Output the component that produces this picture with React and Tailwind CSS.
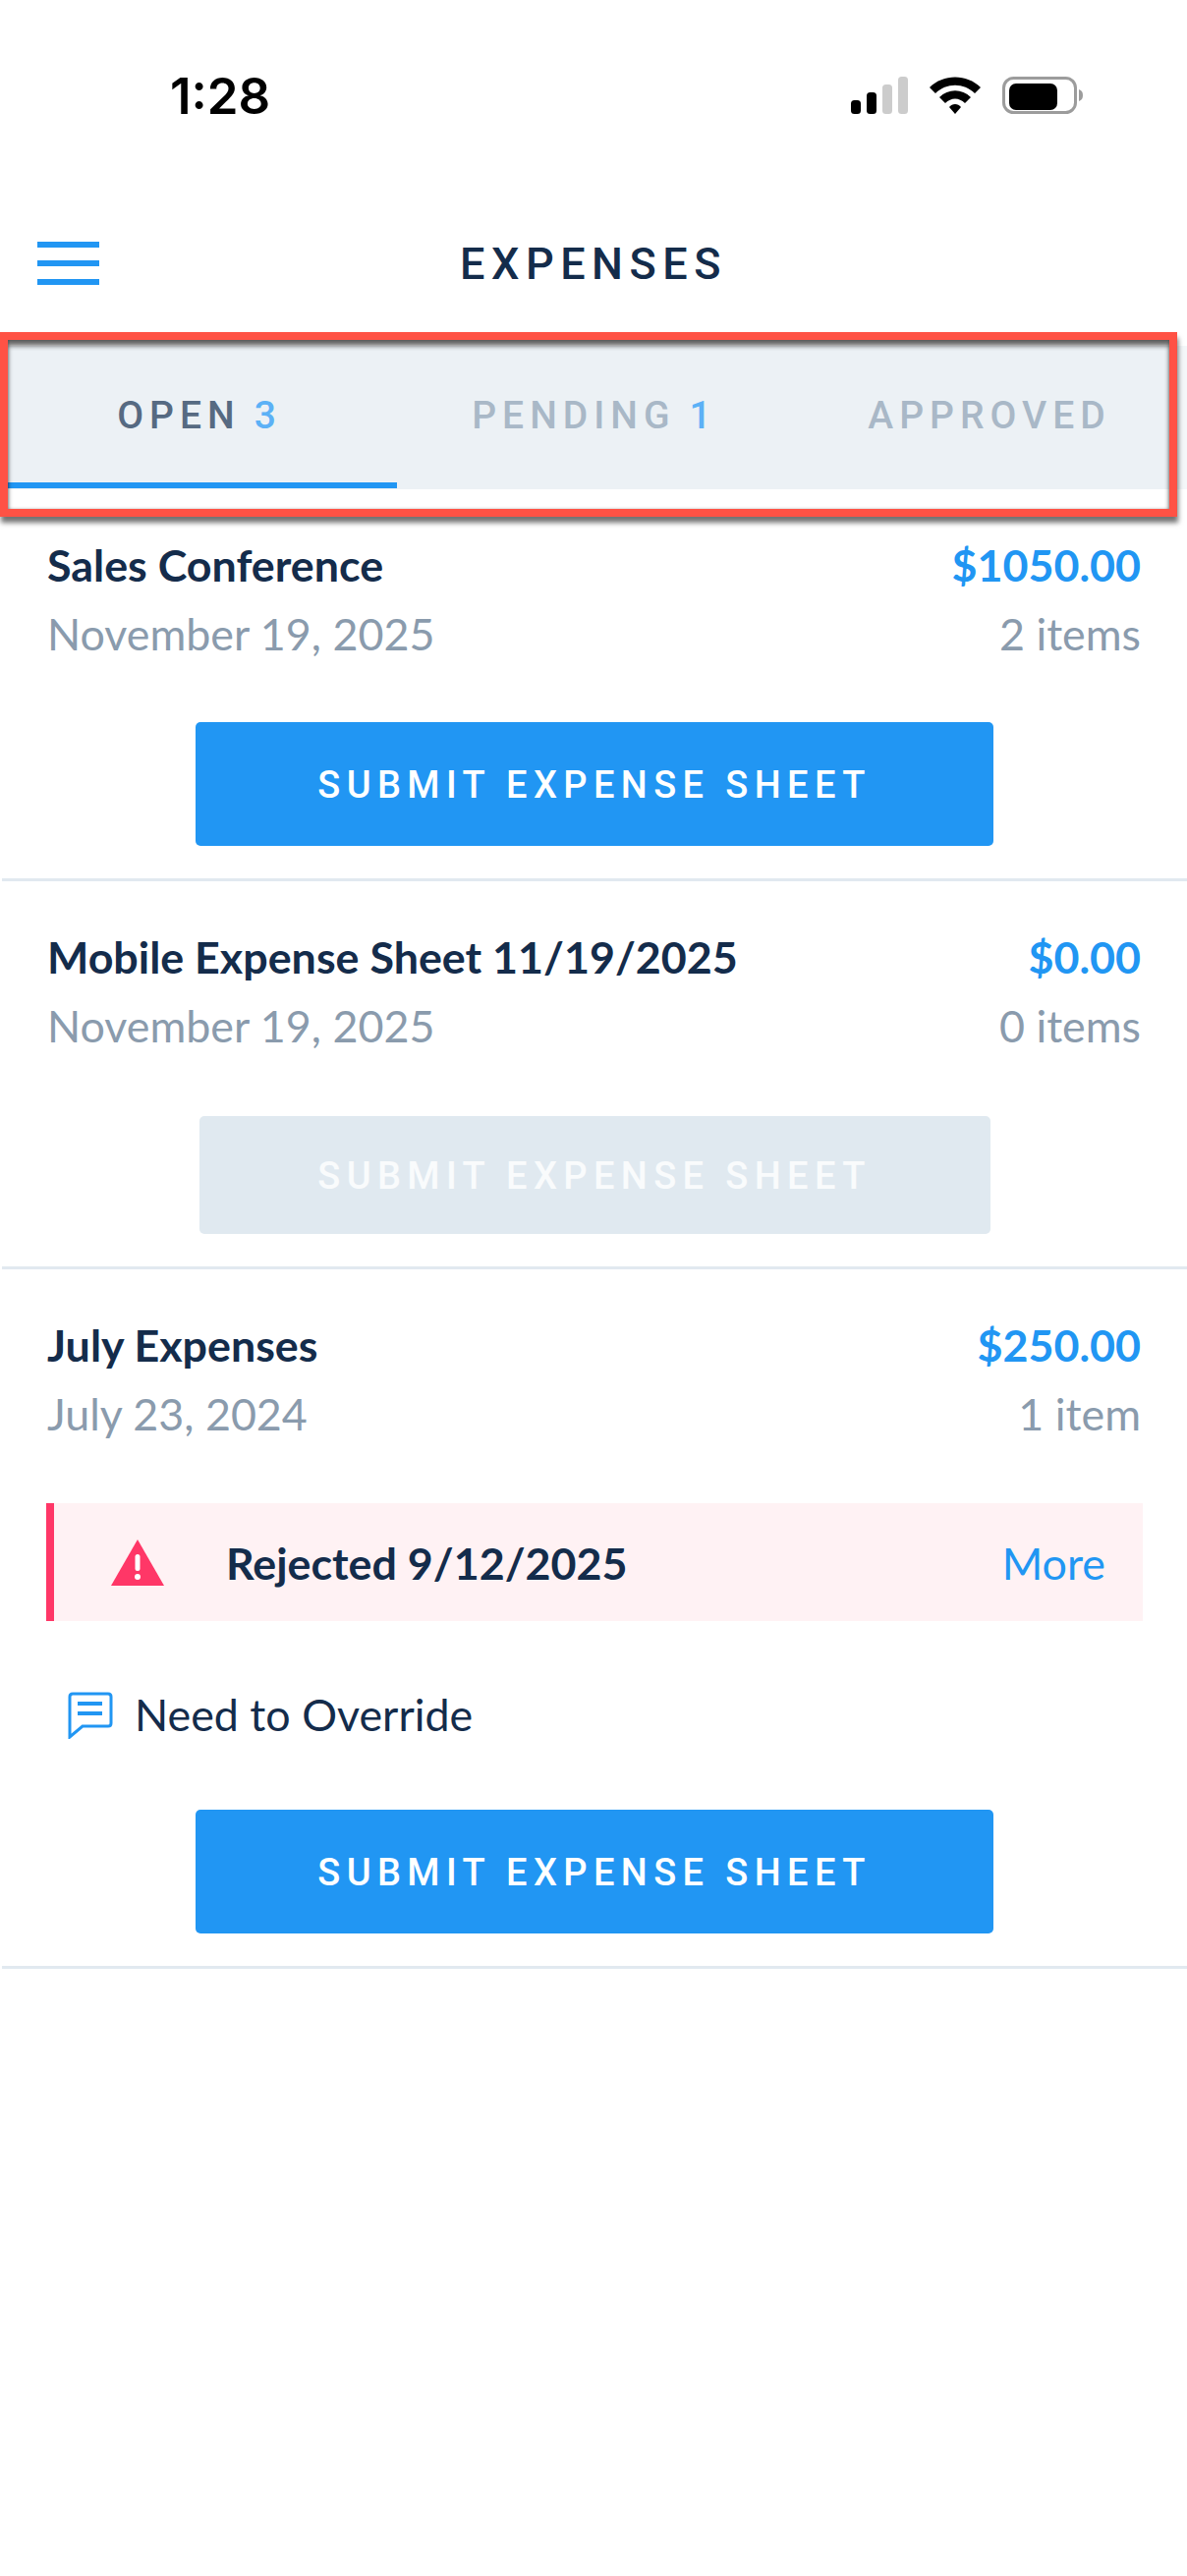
const LATO = "font-['Lato','Liberation_Sans',sans-serif]";

function StatusIcons() {
  return (
    <div className="flex items-center gap-[22px]">
      <svg width="58" height="38" viewBox="0 0 58 38">
        <rect x="0" y="24" width="10" height="14" rx="3.5" fill="#000" />
        <rect x="16" y="16" width="10" height="22" rx="3.5" fill="#000" />
        <rect x="32" y="8" width="10" height="30" rx="3.5" fill="#ccc" />
        <rect x="48" y="0" width="10" height="38" rx="3.5" fill="#ccc" />
      </svg>
      <svg width="52" height="38" viewBox="0 0 52 38">
        <path d="M0 11 C14 -3 38 -3 52 11 L46 17 C35 6 17 6 6 17 Z" fill="#000" />
        <path d="M10 21 C19 12 33 12 42 21 L36 27 C30 21 22 21 16 27 Z" fill="#000" />
        <path d="M20 31 C23 27 29 27 32 31 L26 38 Z" fill="#000" />
      </svg>
      <svg width="84" height="38" viewBox="0 0 84 38">
        <rect x="1.5" y="1.5" width="73" height="35" rx="10" fill="none" stroke="#9c9c9c" strokeWidth="3" />
        <rect x="7" y="7" width="49" height="27" rx="7" fill="#000" />
        <path d="M78 13 C81 14 82 16 82 19 C82 22 81 24 78 25 Z" fill="#9c9c9c" />
      </svg>
    </div>
  );
}

function Tab({ label, count, active }) {
  return (
    <div className={`relative flex h-[146px] items-center justify-center pb-[4px] font-['Roboto',sans-serif] text-[39px] font-medium tracking-[6px] ${active ? "text-[#566a82]" : "text-[#a9b8c7]"}`}>
      <span>
        {label}
        {count ? <span className="ml-[14px] text-[#5cb1f6]">{count}</span> : null}
      </span>
      {active ? <div className="absolute bottom-[1px] left-0 right-0 h-[6px] bg-[#2196f3]" /> : null}
    </div>
  );
}

function SubmitButton({ disabled }) {
  return (
    <div className="flex justify-center">
      <div className={`flex items-center justify-center rounded-[5px] pt-[2px] font-['Roboto',sans-serif] text-[38px] font-medium tracking-[6.4px] ${disabled ? "h-[120px] w-[805px] bg-[#e0e9f0] text-white/80" : "h-[126px] w-[812px] bg-[#2196f3] text-white"}`}>
        SUBMIT EXPENSE SHEET
      </div>
    </div>
  );
}

function Sheet({ title, date, amount, items, children, disabled, buttonTop = "pt-[60px]" }) {
  return (
    <div className="border-b-[3px] border-[#e1e9f0]">
      <div className="pl-[46px] pr-[47px]">
        <div className="flex items-center justify-between">
          <div className="text-[44.8px] font-bold leading-[60px] text-[#142c4b]">{title}</div>
          <div className="text-[44.8px] font-bold leading-[60px] text-[#2196f3]">{amount}</div>
        </div>
        <div className="mt-[10px] flex items-center justify-between text-[44.8px] leading-[60px] text-[#8a9bad]">
          <div>{date}</div>
          <div>{items}</div>
        </div>
      </div>
      {children}
      <div className={`pb-[33px] ${buttonTop}`}>
        <SubmitButton disabled={disabled} />
      </div>
    </div>
  );
}

export default function App() {
  return (
    <div className={`relative h-[2622px] w-[1208px] overflow-hidden bg-white ${LATO}`}>
      {/* status bar */}
      <div className="flex h-[194px] items-start justify-between pl-[173px] pr-[104px] pt-[73px]">
        <div className="font-['Inter',sans-serif] text-[51px] font-semibold leading-[50px] text-black">1:28</div>
        <div className="pt-[5px]">
          <StatusIcons />
        </div>
      </div>

      {/* nav */}
      <div className="relative flex h-[158px] items-start justify-center pt-[50px]">
        <div className="absolute left-[38px] top-[52px] flex w-[63px] flex-col gap-[13px]">
          <div className="h-[6px] bg-[#2196f3]" />
          <div className="h-[6px] bg-[#2196f3]" />
          <div className="h-[6px] bg-[#2196f3]" />
        </div>
        <div className="font-['Roboto',sans-serif] text-[45px] font-medium leading-[50px] tracking-[6.5px] text-[#142c4b]">EXPENSES</div>
      </div>

      {/* tabs */}
      <div className="relative ml-[2px] grid h-[146px] grid-cols-3 items-end bg-[#ecf1f5]">
        <Tab label="OPEN" count="3" active />
        <Tab label="PENDING" count="1" />
        <Tab label="APPROVED" />
        <div className="absolute inset-y-0 right-0 w-[10px] bg-[#f4f7f9]" />
      </div>

      {/* list */}
      <div className="ml-[2px] pt-[47px]">
        <Sheet title="Sales Conference" date="November 19, 2025" amount="$1050.00" items="2 items" />
        <div className="pt-[47px]">
          <Sheet title="Mobile Expense Sheet 11/19/2025" date="November 19, 2025" amount="$0.00" items="0 items" disabled buttonTop="pt-[62px]" />
        </div>
        <div className="pt-[47px]">
          <Sheet title="July Expenses" date="July 23, 2024" amount="$250.00" items="1 item" buttonTop="pt-[66px]">
            <div className="mx-[45px] mt-[61px] flex h-[120px] items-center justify-between border-l-[8px] border-[#ff3767] bg-[#fff2f4] pr-[38px]">
              <div className="flex items-center">
                <svg width="54" height="47" viewBox="0 0 54 47" className="ml-[58px]">
                  <path d="M27 0 L54 47 L0 47 Z" fill="#ff3767" />
                  <rect x="24.5" y="15" width="5" height="17" rx="2.5" fill="#fff" />
                  <circle cx="27" cy="38" r="3" fill="#fff" />
                </svg>
                <div className="ml-[63px] pt-[3px] text-[44.8px] font-bold text-[#142c4b]">Rejected 9/12/2025</div>
              </div>
              <div className="pt-[3px] text-[44.8px] text-[#2196f3]">More</div>
            </div>
            <div className="ml-[67px] mt-[66px] flex h-[60px] items-center">
              <svg width="46" height="48" viewBox="0 0 46 48">
                <path d="M5 2 H41 Q44 2 44 5 V32 Q44 35 41 35 H15 L2 46 V5 Q2 2 5 2 Z" fill="none" stroke="#2196f3" strokeWidth="3" />
                <rect x="10" y="10" width="25" height="4" fill="#2196f3" />
                <rect x="10" y="20" width="25" height="4" fill="#2196f3" />
              </svg>
              <div className="ml-[22px] text-[44.8px] text-[#142c4b]">Need to Override</div>
            </div>
          </Sheet>
        </div>
      </div>

      {/* annotation box */}
      <div className="absolute left-0 top-[338px] h-[188px] w-[1198px] border-[8px] border-[#ff5245] shadow-[1px_6px_5px_rgba(0,0,0,0.55),inset_0_6px_5px_rgba(0,0,0,0.6),inset_0_0_3px_rgba(0,0,0,0.3)]" />
    </div>
  );
}
